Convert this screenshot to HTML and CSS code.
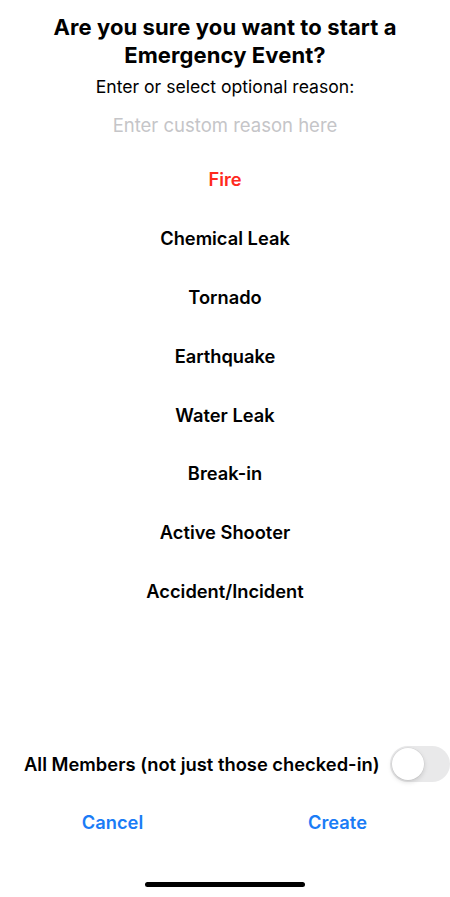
FILE: index.html
```html
<!DOCTYPE html>
<html lang="en">
<head>
<meta charset="utf-8">
<title>Start Emergency Event</title>
<link rel="stylesheet" href="styles.css">
</head>
<body>
<div class="screen">
  <h1 class="title">Are you sure you want to start a<br>Emergency Event?</h1>
  <p class="subtitle">Enter or select optional reason:</p>
  <div class="input">Enter custom reason here</div>
  <ul class="reasons">
    <li class="reason reason-selected">Fire</li>
    <li class="reason">Chemical Leak</li>
    <li class="reason">Tornado</li>
    <li class="reason">Earthquake</li>
    <li class="reason">Water Leak</li>
    <li class="reason">Break-in</li>
    <li class="reason">Active Shooter</li>
    <li class="reason">Accident/Incident</li>
  </ul>
  <div class="bottom">
    <div class="toggle-row">
      <span class="toggle-label">All Members (not just those checked-in)</span>
      <span class="toggle"><span class="knob"></span></span>
    </div>
    <div class="actions">
      <span class="action">Cancel</span>
      <span class="action">Create</span>
    </div>
    <div class="home-indicator"></div>
  </div>
</div>
</body>
</html>
```
FILE: styles.css
```css
html, body {
  margin: 0;
  padding: 0;
  background: #ffffff;
}
.screen {
  width: 450px;
  height: 897px;
  display: flex;
  flex-direction: column;
  font-family: Inter, "Liberation Sans", sans-serif;
  color: #000;
  overflow: hidden;
}
.title {
  margin: 13px 0 0;
  font-size: 22px;
  line-height: 28px;
  font-weight: 700;
  text-align: center;
  letter-spacing: 0.1px;
}
.subtitle {
  margin: 7px 0 0;
  font-size: 17.6px;
  line-height: 22px;
  font-weight: 400;
  text-align: center;
}
.input {
  margin-top: 16px;
  font-size: 18.5px;
  line-height: 22px;
  color: #c5c5c8;
  text-align: center;
}
.reasons {
  list-style: none;
  margin: 14px 0 0;
  padding: 0;
}
.reason {
  height: 58.8px;
  display: flex;
  align-items: center;
  justify-content: center;
  font-size: 18.3px;
  font-weight: 600;
}
.reason-selected {
  color: #ff2a1e;
}
.bottom {
  margin-top: auto;
  display: flex;
  flex-direction: column;
  padding-bottom: 10.5px;
}
.toggle-row {
  display: flex;
  align-items: center;
  justify-content: space-between;
  padding-left: 24px;
  height: 36px;
}
.toggle-label {
  font-size: 18.35px;
  font-weight: 600;
}
.toggle {
  position: relative;
  width: 60px;
  height: 36px;
  border-radius: 18px;
  background: #e9e9ea;
  flex: none;
}
.knob {
  position: absolute;
  left: 2px;
  top: 2px;
  width: 32px;
  height: 32px;
  border-radius: 50%;
  background: #fff;
  box-shadow: 0 2px 5px rgba(0,0,0,0.15), 0 0 0 0.5px rgba(0,0,0,0.06);
}
.actions {
  margin-top: 20px;
  display: flex;
  height: 40px;
}
.action {
  flex: 1;
  display: flex;
  align-items: center;
  justify-content: center;
  font-size: 18.3px;
  font-weight: 600;
  color: #1a7cf6;
}
.home-indicator {
  margin: 39.5px auto 0;
  width: 160px;
  height: 5px;
  border-radius: 3px;
  background: #000;
}
```
